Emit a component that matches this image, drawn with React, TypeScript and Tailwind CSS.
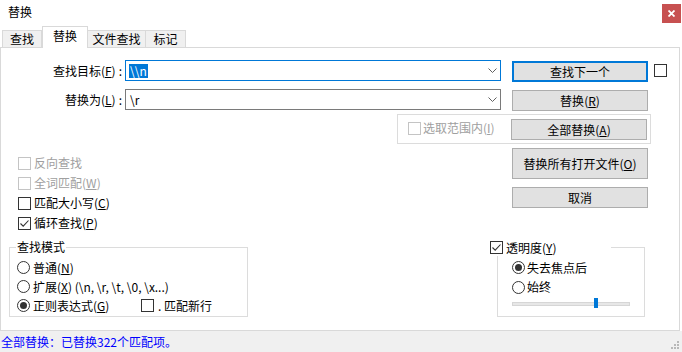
import React from "react";

const M = ({ c }: { c: string }) => (
  <>
    (<span className="underline underline-offset-[1px]">{c}</span>)
  </>
);

function Check({ checked = false, disabled = false }: { checked?: boolean; disabled?: boolean }) {
  return (
    <span
      className={
        disabled
          ? "w-[13px] h-[13px] border border-[#c4c4c4] bg-white flex items-center justify-center shrink-0"
          : "w-[13px] h-[13px] border border-[#333333] bg-white flex items-center justify-center shrink-0"
      }
    >
      {checked && (
        <svg width="11" height="11" viewBox="0 0 11 11">
          <path d="M1.5 5.5 L4.2 8.2 L9.5 2.5" stroke="#333" strokeWidth="1.1" fill="none" />
        </svg>
      )}
    </span>
  );
}

function Radio({ checked = false }: { checked?: boolean }) {
  return (
    <span className="w-[13px] h-[13px] rounded-full border border-[#333333] bg-white flex items-center justify-center shrink-0">
      {checked && <span className="w-[7px] h-[7px] rounded-full bg-[#333333]" />}
    </span>
  );
}

function Btn({ children, h = "h-[21px]", def = false }: { children: React.ReactNode; h?: string; def?: boolean }) {
  return (
    <div
      className={
        (def
          ? "border-2 border-[#0078d7] "
          : "border border-[#adadad] ") +
        "w-[136px] bg-[#e1e1e1] flex items-center justify-center text-[12px] leading-[14px] text-black " +
        h
      }
    >
      {children}
    </div>
  );
}

function Chevron() {
  return (
    <svg width="9" height="5" viewBox="0 0 9 5" className="shrink-0">
      <path d="M0.5 0.5 L4.5 4.5 L8.5 0.5" stroke="#606060" strokeWidth="1" fill="none" />
    </svg>
  );
}

function Combo({ focus = false, children }: { focus?: boolean; children: React.ReactNode }) {
  return (
    <div
      className={
        (focus ? "border-[#0078d7] " : "border-[#7a7a7a] ") +
        "w-[376px] h-[21px] border bg-white flex items-center justify-between pl-[2px] pr-[3px]"
      }
    >
      <div className="flex items-center">{children}</div>
      <Chevron />
    </div>
  );
}

export default function App() {
  return (
    <div className="w-[682px] h-[352px] bg-white overflow-hidden flex flex-col text-[12px] text-black font-['Noto_Sans_CJK_SC',sans-serif]">
      {/* title bar */}
      <div className="h-[26px] flex items-start justify-between shrink-0">
        <div className="pl-[8px] pt-[4px] leading-[16px] text-[12px]">替换</div>
        <div className="mt-[4px] mr-[1px] w-[19px] h-[19px] bg-[#c75050] flex items-center justify-center">
          <svg width="7" height="7" viewBox="0 0 7 7">
            <path d="M0.5 0.5 L6.5 6.5 M6.5 0.5 L0.5 6.5" stroke="white" strokeWidth="1.8" />
          </svg>
        </div>
      </div>

      {/* tabs */}
      <div className="h-[21px] flex items-end pl-[2px] shrink-0">
        <div className="w-[40px] h-[17px] bg-[#f0f0f0] border border-b-0 border-[#d9d9d9] flex items-center justify-center leading-[14px]">查找</div>
        <div className="w-[46px] h-[22px] bg-white border border-b-0 border-[#d9d9d9] -mb-px relative z-10 flex items-start justify-center pt-[2px] leading-[14px]">替换</div>
        <div className="w-[58px] h-[17px] bg-[#f0f0f0] border border-b-0 border-l-0 border-[#d9d9d9] flex items-center justify-center leading-[14px]">文件查找</div>
        <div className="w-[40px] h-[17px] bg-[#f0f0f0] border border-b-0 border-l-0 border-[#d9d9d9] flex items-center justify-center leading-[14px]">标记</div>
      </div>

      {/* panel */}
      <div className="w-[680px] h-[284px] border border-[#d9d9d9] bg-white flex flex-col shrink-0">
        {/* row 1 */}
        <div className="mt-[12px] h-[22px] flex items-start">
          <div className="w-[121px] h-[21px] flex items-center justify-end leading-[14px]">
            查找目标<M c="F" /><span className="ml-[3px]">:</span>
          </div>
          <div className="ml-[3px]">
            <Combo focus>
              <span className="bg-[#0078d7] text-white leading-[14px] px-[1px] ml-[1px]">\\n</span>
            </Combo>
          </div>
          <div className="ml-[11px] mt-[1px]">
            <Btn def>查找下一个</Btn>
          </div>
          <div className="ml-[6px] mt-[4px]">
            <Check />
          </div>
        </div>

        {/* row 2 */}
        <div className="mt-[7px] h-[22px] flex items-start">
          <div className="w-[121px] h-[21px] flex items-center justify-end leading-[14px]">
            替换为<M c="L" /><span className="ml-[3px]">:</span>
          </div>
          <div className="ml-[3px]">
            <Combo>
              <span className="leading-[14px] ml-[2px]">\r</span>
            </Combo>
          </div>
          <div className="ml-[11px] mt-[1px]">
            <Btn>
              替换<M c="R" />
            </Btn>
          </div>
        </div>

        {/* row 3 : selection group */}
        <div className="mt-[3px] ml-[396px] w-[254px] h-[30px] border border-[#dcdcdc] flex items-start">
          <div className="ml-[10px] mt-[7px]">
            <Check disabled />
          </div>
          <div className="ml-[2px] mt-[6px] leading-[14px] text-[#a0a0a0]">
            选取范围内<M c="I" />
          </div>
          <div className="ml-auto mr-[3px] mt-[4px]">
            <Btn>
              全部替换<M c="A" />
            </Btn>
          </div>
        </div>

        {/* middle */}
        <div className="h-[103px] flex items-start">
          <div className="w-[511px] pl-[17px] pt-[9px] flex flex-col">
            <div className="h-[20px] flex items-center gap-[3px] text-[#a0a0a0]">
              <Check disabled />
              <span className="leading-[14px]">反向查找</span>
            </div>
            <div className="h-[20px] flex items-center gap-[3px] text-[#a0a0a0]">
              <Check disabled />
              <span className="leading-[14px]">
                全词匹配<M c="W" />
              </span>
            </div>
            <div className="h-[20px] flex items-center gap-[3px]">
              <Check />
              <span className="leading-[14px]">
                匹配大小写<M c="C" />
              </span>
            </div>
            <div className="h-[20px] flex items-center gap-[3px]">
              <Check checked />
              <span className="leading-[14px]">
                循环查找<M c="P" />
              </span>
            </div>
          </div>
          <div className="pt-[4px] flex flex-col gap-[8px]">
            <Btn h="h-[31px]">
              替换所有打开文件<M c="O" />
            </Btn>
            <Btn>取消</Btn>
          </div>
        </div>

        {/* bottom groups */}
        <div className="flex items-start">
          <div className="ml-[8px] w-[239px] h-[70px] border border-[#dcdcdc] relative flex flex-col pt-[10px] pl-[7px]">
            <div className="absolute left-[6px] top-[-9px] bg-white px-[1px] leading-[16px]">查找模式</div>
            <div className="h-[19px] flex items-center gap-[3px]">
              <Radio />
              <span className="leading-[14px]">
                普通<M c="N" />
              </span>
            </div>
            <div className="h-[19px] flex items-center gap-[3px]">
              <Radio />
              <span className="leading-[14px]">
                扩展<M c="X" /> (\n, \r, \t, \0, \x...)
              </span>
            </div>
            <div className="h-[19px] flex items-center">
              <Radio checked />
              <span className="ml-[3px] w-[108px] leading-[14px]">
                正则表达式<M c="G" />
              </span>
              <Check />
              <span className="ml-[4px] leading-[14px]">. 匹配新行</span>
            </div>
          </div>

          <div className="ml-[249px] w-[148px] h-[70px] border border-[#dcdcdc] relative flex flex-col pt-[10px] pl-[14px]">
            <div className="absolute left-[-8px] top-[-9px] w-[121px] h-[17px] bg-white flex items-center gap-[3px]">
              <Check checked />
              <span className="leading-[14px]">
                透明度<M c="Y" />
              </span>
            </div>
            <div className="h-[19px] flex items-center gap-[2px]">
              <Radio checked />
              <span className="leading-[14px]">失去焦点后</span>
            </div>
            <div className="h-[20px] flex items-center gap-[2px]">
              <Radio />
              <span className="leading-[14px]">始终</span>
            </div>
            <div className="relative mt-[1px] w-[118px] h-[10px]">
              <div className="absolute left-0 right-0 top-[4px] h-[4px] bg-[#e7e7e7] border border-[#d6d6d6]" />
              <div className="absolute left-[82px] top-0 w-[4px] h-[10px] bg-[#0078d7]" />
            </div>
          </div>
        </div>
      </div>

      {/* status bar */}
      <div className="h-[21px] bg-[#f0f0f0] flex items-center justify-between shrink-0">
        <span className="pl-[1px] text-[#0000ff] leading-[14px]">全部替换：已替换322个匹配项。</span>
        <svg width="10" height="10" viewBox="0 0 10 10" className="mr-[2px] self-end mb-[2px]">
          <rect x="7" y="1" width="2" height="2" fill="#b8b8b8" />
          <rect x="4" y="4" width="2" height="2" fill="#b8b8b8" />
          <rect x="7" y="4" width="2" height="2" fill="#b8b8b8" />
          <rect x="1" y="7" width="2" height="2" fill="#b8b8b8" />
          <rect x="4" y="7" width="2" height="2" fill="#b8b8b8" />
          <rect x="7" y="7" width="2" height="2" fill="#b8b8b8" />
        </svg>
      </div>
    </div>
  );
}
